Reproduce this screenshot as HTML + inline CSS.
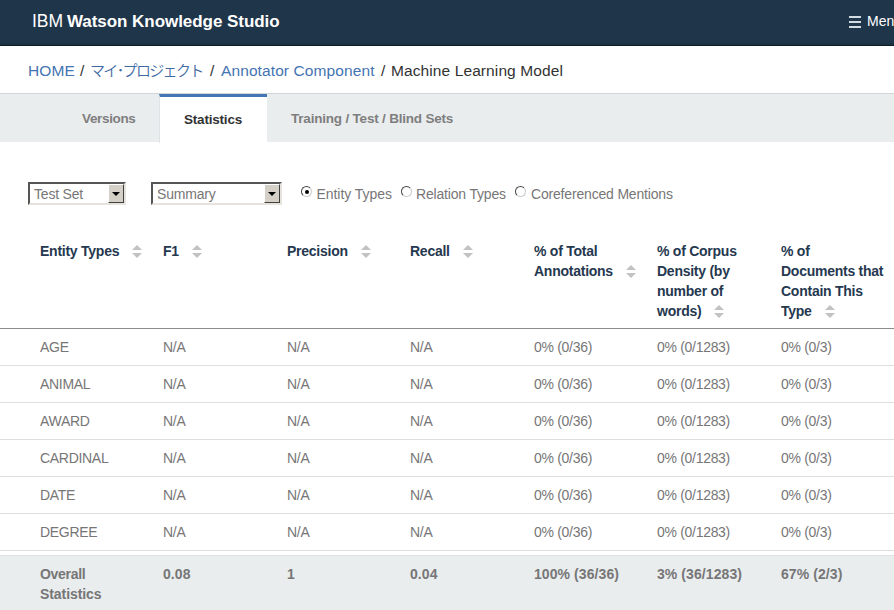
<!DOCTYPE html>
<html lang="ja">
<head>
<meta charset="utf-8">
<title>IBM Watson Knowledge Studio</title>
<style>
*{box-sizing:border-box;margin:0;padding:0}
html,body{width:894px;height:610px;overflow:hidden;background:#fff}
body{font-family:"Liberation Sans","Noto Sans CJK JP",sans-serif;color:#323232;position:relative}
.hdr{position:absolute;left:0;top:0;width:894px;height:46px;background:#1f354a;border-bottom:1px solid #0e1c27;color:#fff;overflow:hidden}
.hdr:after{content:"";position:absolute;left:0;top:43px;width:100%;height:2px;background:#1b3142}
.hdr .title{position:absolute;left:32px;top:10px;font-size:17.5px;line-height:22px;white-space:nowrap}
.hdr .title b{font-weight:700;font-size:17px;margin-left:-1px;letter-spacing:-0.05px}
.hdr .menu{position:absolute;left:867px;top:12px;font-size:14px;line-height:18px;white-space:nowrap}
.hdr .burger{position:absolute;left:849px;top:16px;width:12px;height:12px}
.hdr .burger i{display:block;height:2px;background:#d3dbe2;margin-bottom:3px}
.crumb{position:absolute;left:0;top:60px;width:894px;height:22px;font-size:15.5px;line-height:22px;white-space:nowrap;color:#323232}
.crumb span{position:absolute;top:0;letter-spacing:0.1px}
.crumb .a{color:#4474b2}
.crumb .jp{font-weight:350;color:#3f6aa3;font-size:15px;letter-spacing:-1.65px}
.tabs{position:absolute;left:0;top:93px;width:894px;height:49px;background:#e9edee;border-top:1px solid #d3d6d8}
.tab{position:absolute;top:16px;font-size:13.5px;font-weight:700;color:#7f7e7f;line-height:18px;white-space:nowrap}
.tabact{position:absolute;left:159px;top:0px;width:108px;height:49px;background:#fff;border-top:3px solid #4475b6;border-left:1px solid #dfe3e5}
.filters{position:absolute;left:0;top:180px;width:894px;height:30px}
.sel{position:absolute;top:2px;height:23px;border:2px solid;border-color:#555 #e6e3dd #e6e3dd #555;background:#fff;font-size:14px;color:#777677;line-height:21px;padding-left:4px;letter-spacing:-0.2px;white-space:nowrap}
.sel .btn{position:absolute;right:0;top:0;width:16px;height:19px;background:#d4d0c8;border:1px solid;border-color:#fff #404040 #404040 #fff}
.sel .btn:after{content:"";position:absolute;left:3px;top:7px;border:4px solid transparent;border-top:4px solid #000;border-bottom:0}
.radio{position:absolute;top:6px;width:11px;height:11px;border-radius:50%;border:1px solid;border-color:#444 #ccc #ccc #444;background:#fff;transform:rotate(0deg)}
.radio.on:after{content:"";position:absolute;left:2.5px;top:2.5px;width:4px;height:4px;border-radius:50%;background:#000}
.rl{position:absolute;top:4px;letter-spacing:-0.18px;font-size:14px;line-height:20px;color:#777677;white-space:nowrap}
table{position:absolute;left:0;top:230px;width:905px;border-collapse:collapse;table-layout:fixed}
th{font-size:14px;font-weight:700;color:#25384f;text-align:left;vertical-align:top;line-height:20px;padding:11px 0 7px 0;border-bottom:1px solid #8c8c8c;white-space:nowrap;letter-spacing:-0.25px}
td{font-size:14px;letter-spacing:-0.3px;color:#777677;height:37px;border-bottom:1px solid #dfdfdf;vertical-align:middle;white-space:nowrap}
th:first-child,td:first-child{padding-left:40px}
.s{display:inline-block;position:relative;width:10px;height:13px;margin-left:13px;vertical-align:-2px}
.s:before{content:"";position:absolute;left:0;top:0;border:5px solid transparent;border-bottom:5px solid #c2c2c2;border-top:0}
.s:after{content:"";position:absolute;left:0;top:8px;border:5px solid transparent;border-top:5px solid #c2c2c2;border-bottom:0}
.foot{position:absolute;left:0;top:555px;width:894px;height:55px;background:#e9edee;border-top:1px solid #dfe3e5}
.foot div{position:absolute;top:8px;letter-spacing:0.08px;font-size:14px;font-weight:700;color:#777677;line-height:20px;white-space:nowrap}
</style>
</head>
<body>
<div class="hdr">
  <div class="title">IBM <b>Watson Knowledge Studio</b></div>
  <div class="burger"><i></i><i></i><i></i></div>
  <div class="menu">Menu</div>
</div>
<div class="crumb">
  <span class="a" style="left:28px">HOME</span>
  <span style="left:80px">/</span>
  <span class="a jp" style="left:90px">マイ･プロジェクト</span>
  <span style="left:210px">/</span>
  <span class="a" style="left:221px">Annotator Component</span>
  <span style="left:381px">/</span>
  <span style="left:391px">Machine Learning Model</span>
</div>
<div class="tabs">
  <div class="tabact"></div>
  <div class="tab" style="left:82px;letter-spacing:-0.35px">Versions</div>
  <div class="tab" style="left:184px;top:17px;color:#323232;letter-spacing:-0.2px">Statistics</div>
  <div class="tab" style="left:291px;letter-spacing:-0.2px">Training / Test / Blind Sets</div>
</div>
<div class="filters">
  <div class="sel" style="left:28px;width:98px">Test Set<span class="btn"></span></div>
  <div class="sel" style="left:151px;width:131px">Summary<span class="btn"></span></div>
  <span class="radio on" style="left:301px"></span><span class="rl" style="left:316.5px;letter-spacing:-0.05px">Entity Types</span>
  <span class="radio" style="left:401px"></span><span class="rl" style="left:416px">Relation Types</span>
  <span class="radio" style="left:515px"></span><span class="rl" style="left:531px">Coreferenced Mentions</span>
</div>
<table>
<colgroup><col style="width:163px"><col style="width:124px"><col style="width:123px"><col style="width:124px"><col style="width:123px"><col style="width:124px"><col style="width:124px"></colgroup>
<thead><tr>
<th>Entity Types<span class="s"></span></th>
<th>F1<span class="s"></span></th>
<th>Precision<span class="s"></span></th>
<th>Recall<span class="s"></span></th>
<th>% of Total<br>Annotations<span class="s"></span></th>
<th>% of Corpus<br>Density (by<br>number of<br>words)<span class="s"></span></th>
<th>% of<br>Documents that<br>Contain This<br>Type<span class="s"></span></th>
</tr></thead>
<tbody>
<tr><td>AGE</td><td>N/A</td><td>N/A</td><td>N/A</td><td>0% (0/36)</td><td>0% (0/1283)</td><td>0% (0/3)</td></tr>
<tr><td>ANIMAL</td><td>N/A</td><td>N/A</td><td>N/A</td><td>0% (0/36)</td><td>0% (0/1283)</td><td>0% (0/3)</td></tr>
<tr><td>AWARD</td><td>N/A</td><td>N/A</td><td>N/A</td><td>0% (0/36)</td><td>0% (0/1283)</td><td>0% (0/3)</td></tr>
<tr><td>CARDINAL</td><td>N/A</td><td>N/A</td><td>N/A</td><td>0% (0/36)</td><td>0% (0/1283)</td><td>0% (0/3)</td></tr>
<tr><td>DATE</td><td>N/A</td><td>N/A</td><td>N/A</td><td>0% (0/36)</td><td>0% (0/1283)</td><td>0% (0/3)</td></tr>
<tr><td>DEGREE</td><td>N/A</td><td>N/A</td><td>N/A</td><td>0% (0/36)</td><td>0% (0/1283)</td><td>0% (0/3)</td></tr>
</tbody>
</table>
<div class="foot">
  <div style="left:40px;letter-spacing:-0.3px">Overall<br><span style="letter-spacing:-0.08px">Statistics</span></div>
  <div style="left:163px">0.08</div>
  <div style="left:287px">1</div>
  <div style="left:410px">0.04</div>
  <div style="left:534px">100% (36/36)</div>
  <div style="left:657px">3% (36/1283)</div>
  <div style="left:781px">67% (2/3)</div>
</div>
</body>
</html>
